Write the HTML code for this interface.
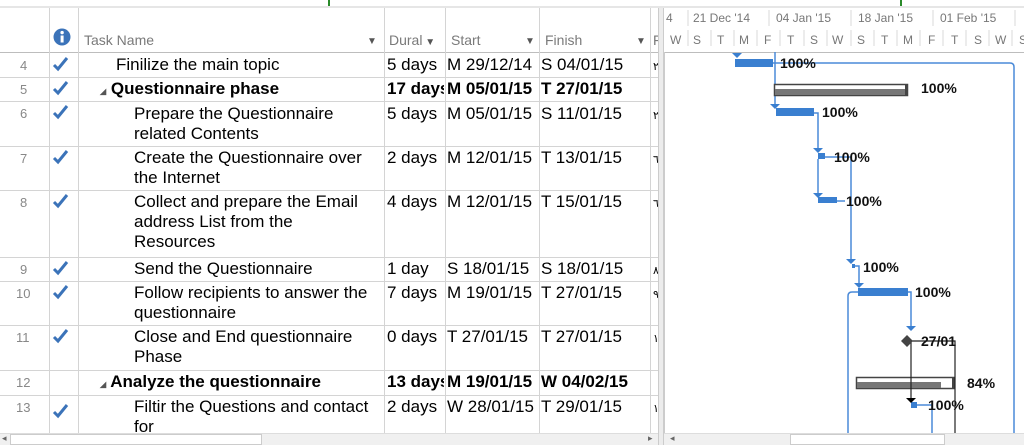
<!DOCTYPE html>
<html><head><meta charset="utf-8"><style>
*{margin:0;padding:0;box-sizing:border-box}
body{width:1024px;height:445px;overflow:hidden;background:#fff;font-family:"Liberation Sans",Arial,sans-serif;position:relative;color:#000}
.a{position:absolute;white-space:nowrap}
.h{font-size:14px;color:#7a7a7a}
.ar{font-size:10px;color:#555}
.t{font-size:17px;line-height:20px}
.n{font-size:13px;color:#888}
.b{font-weight:bold}
.hl{position:absolute;left:0;width:658px;height:1px;background:#d4d4d4}
.vl{position:absolute;top:8px;width:1px;height:425px;background:#d4d4d4}
</style></head><body>
<div class="a" style="left:0;top:6px;width:1024px;height:2px;background:#e6e6e6"></div>
<div class="a" style="left:328px;top:0;width:2px;height:6px;background:#2a8a2a"></div>
<div class="a" style="left:900px;top:0;width:2px;height:6px;background:#2a8a2a"></div>
<div class="hl" style="top:52px;background:#bdbdbd"></div>
<div class="vl" style="left:49px"></div>
<div class="vl" style="left:78px"></div>
<div class="vl" style="left:384px"></div>
<div class="vl" style="left:445px"></div>
<div class="vl" style="left:539px"></div>
<div class="vl" style="left:650px"></div>
<svg class="a" style="left:53px;top:28px" width="18" height="18"><circle cx="9" cy="9" r="8.5" fill="#3b73b9"/><rect x="7.6" y="7.5" width="3" height="7" fill="#fff"/><circle cx="9.1" cy="4.6" r="1.7" fill="#fff"/></svg>
<div class="a h" style="left:84px;top:32px">Task Name</div>
<div class="a ar" style="left:367px;top:36px">▼</div>
<div class="a h" style="left:389px;top:32px">Dural<span class="ar"> ▼</span></div>
<div class="a h" style="left:451px;top:32px">Start</div>
<div class="a ar" style="left:525px;top:36px">▼</div>
<div class="a h" style="left:545px;top:32px">Finish</div>
<div class="a ar" style="left:636px;top:36px">▼</div>
<div class="a h" style="left:653px;top:32px">F</div>

<div class="hl" style="top:77px"></div>
<div class="hl" style="top:101px"></div>
<div class="hl" style="top:146px"></div>
<div class="hl" style="top:190px"></div>
<div class="hl" style="top:257px"></div>
<div class="hl" style="top:281px"></div>
<div class="hl" style="top:325px"></div>
<div class="hl" style="top:370px"></div>
<div class="hl" style="top:395px"></div>

<div class="a n" style="left:20px;top:58px">4</div>
<div class="a n" style="left:20px;top:82px">5</div>
<div class="a n" style="left:20px;top:106px">6</div>
<div class="a n" style="left:20px;top:151px">7</div>
<div class="a n" style="left:20px;top:195px">8</div>
<div class="a n" style="left:20px;top:262px">9</div>
<div class="a n" style="left:16px;top:286px">10</div>
<div class="a n" style="left:16px;top:330px">11</div>
<div class="a n" style="left:16px;top:375px">12</div>
<div class="a n" style="left:16px;top:400px">13</div>

<svg class="a" style="left:0;top:0" width="80" height="445">
<g fill="none" stroke="#3b73b9" stroke-width="3">
<path d="M54 65l4 4 9-11"/><path d="M54 89l4 4 9-11"/><path d="M54 113l4 4 9-11"/><path d="M54 158l4 4 9-11"/><path d="M54 202l4 4 9-11"/><path d="M54 269l4 4 9-11"/><path d="M54 293l4 4 9-11"/><path d="M54 337l4 4 9-11"/><path d="M54 412l4 4 9-11"/>
</g></svg>

<div class="a t" style="left:116px;top:55px">Finilize the main topic</div>
<div class="a t b" style="left:100px;top:79px"><span style="font-size:8px;color:#555">◢</span> Questionnaire phase</div>
<div class="a t" style="left:134px;top:104px">Prepare the Questionnaire<br>related Contents</div>
<div class="a t" style="left:134px;top:148px">Create the Questionnaire over<br>the Internet</div>
<div class="a t" style="left:134px;top:192px">Collect and prepare the Email<br>address List from the<br>Resources</div>
<div class="a t" style="left:134px;top:259px">Send the Questionnaire</div>
<div class="a t" style="left:134px;top:283px">Follow recipients to answer the<br>questionnaire</div>
<div class="a t" style="left:134px;top:327px">Close and End questionnaire<br>Phase</div>
<div class="a t b" style="left:100px;top:372px"><span style="font-size:8px;color:#555">◢</span> Analyze the questionnaire</div>
<div class="a t" style="left:134px;top:397px">Filtir the Questions and contact<br>for</div>

<div class="a t" style="left:387px;top:55px">5 days</div>
<div class="a t b" style="left:387px;top:79px;width:57px;overflow:hidden">17 days</div>
<div class="a t" style="left:387px;top:104px">5 days</div>
<div class="a t" style="left:387px;top:148px">2 days</div>
<div class="a t" style="left:387px;top:192px">4 days</div>
<div class="a t" style="left:387px;top:259px">1 day</div>
<div class="a t" style="left:387px;top:283px">7 days</div>
<div class="a t" style="left:387px;top:327px">0 days</div>
<div class="a t b" style="left:387px;top:372px;width:57px;overflow:hidden">13 days</div>
<div class="a t" style="left:387px;top:397px">2 days</div>

<div class="a t" style="left:447px;top:55px">M 29/12/14</div>
<div class="a t b" style="left:447px;top:79px">M 05/01/15</div>
<div class="a t" style="left:447px;top:104px">M 05/01/15</div>
<div class="a t" style="left:447px;top:148px">M 12/01/15</div>
<div class="a t" style="left:447px;top:192px">M 12/01/15</div>
<div class="a t" style="left:447px;top:259px">S 18/01/15</div>
<div class="a t" style="left:447px;top:283px">M 19/01/15</div>
<div class="a t" style="left:447px;top:327px">T 27/01/15</div>
<div class="a t b" style="left:447px;top:372px">M 19/01/15</div>
<div class="a t" style="left:447px;top:397px">W 28/01/15</div>

<div class="a t" style="left:541px;top:55px">S 04/01/15</div>
<div class="a t b" style="left:541px;top:79px">T 27/01/15</div>
<div class="a t" style="left:541px;top:104px">S 11/01/15</div>
<div class="a t" style="left:541px;top:148px">T 13/01/15</div>
<div class="a t" style="left:541px;top:192px">T 15/01/15</div>
<div class="a t" style="left:541px;top:259px">S 18/01/15</div>
<div class="a t" style="left:541px;top:283px">T 27/01/15</div>
<div class="a t" style="left:541px;top:327px">T 27/01/15</div>
<div class="a t b" style="left:541px;top:372px">W 04/02/15</div>
<div class="a t" style="left:541px;top:397px">T 29/01/15</div>
<div class="a" style="left:653px;top:60px;font-size:11px">٢</div>
<div class="a" style="left:653px;top:109px;font-size:11px">٢</div>
<div class="a" style="left:653px;top:153px;font-size:11px">٦</div>
<div class="a" style="left:653px;top:197px;font-size:11px">٦</div>
<div class="a" style="left:653px;top:264px;font-size:11px">٨</div>
<div class="a" style="left:653px;top:288px;font-size:11px">٩</div>
<div class="a" style="left:653px;top:332px;font-size:11px">١</div>
<div class="a" style="left:653px;top:402px;font-size:11px">١</div>

<div class="a" style="left:658px;top:8px;width:6px;height:437px;background:#ececec;border-left:1px solid #ccc;border-right:1px solid #ccc"></div>

<svg class="a" style="left:0;top:0" width="1024" height="445" font-family="Liberation Sans,Arial,sans-serif">
<g font-size="12" fill="#777">
<text x="666" y="22">4</text><text x="693" y="22">21 Dec '14</text><text x="776" y="22">04 Jan '15</text><text x="858" y="22">18 Jan '15</text><text x="940" y="22">01 Feb '15</text>
<text x="670" y="44">W</text><text x="693" y="44">S</text><text x="717" y="44">T</text><text x="739" y="44">M</text><text x="764" y="44">F</text><text x="787" y="44">T</text><text x="810" y="44">S</text><text x="832" y="44">W</text><text x="857" y="44">S</text><text x="881" y="44">T</text><text x="903" y="44">M</text><text x="928" y="44">F</text><text x="951" y="44">T</text><text x="974" y="44">S</text><text x="995" y="44">W</text><text x="1019" y="44">S</text>
</g>
<g stroke="#d8d8d8"><line x1="688" y1="10" x2="688" y2="26"/><line x1="769" y1="10" x2="769" y2="26"/><line x1="851" y1="10" x2="851" y2="26"/><line x1="933" y1="10" x2="933" y2="26"/><line x1="1015" y1="10" x2="1015" y2="26"/>
<path d="M688 30v16M711 30v16M734 30v16M757 30v16M780 30v16M804 30v16M827 30v16M851 30v16M874 30v16M897 30v16M920 30v16M943 30v16M966 30v16M989 30v16M1012 30v16"/></g>
<line x1="664" y1="52.5" x2="1024" y2="52.5" stroke="#bdbdbd"/>
<g fill="none" stroke="#4a8ad8" stroke-width="1.5">
<path d="M773 63H1010q4 0 4 4V435"/>
<path d="M775 52V108"/>
<path d="M814 113H818V152"/>
<path d="M818 159V197"/>
<path d="M825 157H851V262"/>
<path d="M837 201H845"/>
<path d="M855 266H859V287"/>
<path d="M908 292H911V328"/>
<path d="M858 292H852q-4 0-4 4V435"/>
<path d="M917 405H932V435"/>
</g>
<g fill="#3a7fd0">
<path d="M732 53h10l-5 5z"/><path d="M770 104h10l-5 5z"/><path d="M813 148h10l-5 5z"/><path d="M813 193h10l-5 5z"/><path d="M846 259h10l-5 5z"/><path d="M854 283h10l-5 5z"/><path d="M906 326h10l-5 5z"/>
<rect x="735" y="59" width="38" height="8"/>
<rect x="776" y="108" width="38" height="8"/>
<rect x="818" y="153" width="7" height="6"/>
<rect x="818" y="197" width="19" height="6"/>
<rect x="852" y="264" width="3" height="4"/>
<rect x="858" y="288" width="50" height="8"/>
<rect x="911" y="402" width="6" height="6"/>
</g>
<rect x="774.5" y="84.5" width="133" height="11" fill="#fff" stroke="#444" stroke-width="1.5"/>
<rect x="775" y="89" width="132" height="6" fill="#777"/>
<rect x="905" y="85" width="3" height="11" fill="#444"/>
<rect x="856.5" y="377.5" width="98" height="11" fill="#fff" stroke="#444" stroke-width="1.5"/>
<rect x="857" y="382" width="84" height="6" fill="#777"/>
<rect x="952" y="378" width="3" height="11" fill="#444"/>
<g fill="none" stroke="#222" stroke-width="1.2">
<path d="M907 341H955V435"/><path d="M911 341V398"/>
</g>
<path d="M906 398h10l-5 5z" fill="#000"/>
<path d="M907 335l6 6-6 6-6-6z" fill="#444"/>
<g font-size="14" font-weight="bold" fill="#111">
<text x="780" y="68">100%</text><text x="921" y="93">100%</text><text x="822" y="117">100%</text><text x="834" y="162">100%</text><text x="846" y="206">100%</text><text x="863" y="272">100%</text><text x="915" y="297">100%</text><text x="921" y="346">27/01</text><text x="967" y="388">84%</text><text x="928" y="410">100%</text>
</g>
</svg>
<div class="a" style="left:664px;top:52px;width:1px;height:383px;background:#ccc"></div>

<div class="a" style="left:0;top:433px;width:658px;height:12px;background:#f0f0f0;border-top:1px solid #ddd"></div>
<div class="a" style="left:10px;top:434px;width:252px;height:11px;background:#fff;border:1px solid #ccc"></div>
<div class="a" style="left:2px;top:433px;font-size:9px;color:#666">◂</div>
<div class="a" style="left:648px;top:433px;font-size:9px;color:#666">▸</div>
<div class="a" style="left:664px;top:433px;width:360px;height:12px;background:#f0f0f0;border-top:1px solid #ddd"></div>
<div class="a" style="left:790px;top:434px;width:155px;height:11px;background:#fff;border:1px solid #ccc"></div>
<div class="a" style="left:670px;top:433px;font-size:9px;color:#666">◂</div>
</body></html>
